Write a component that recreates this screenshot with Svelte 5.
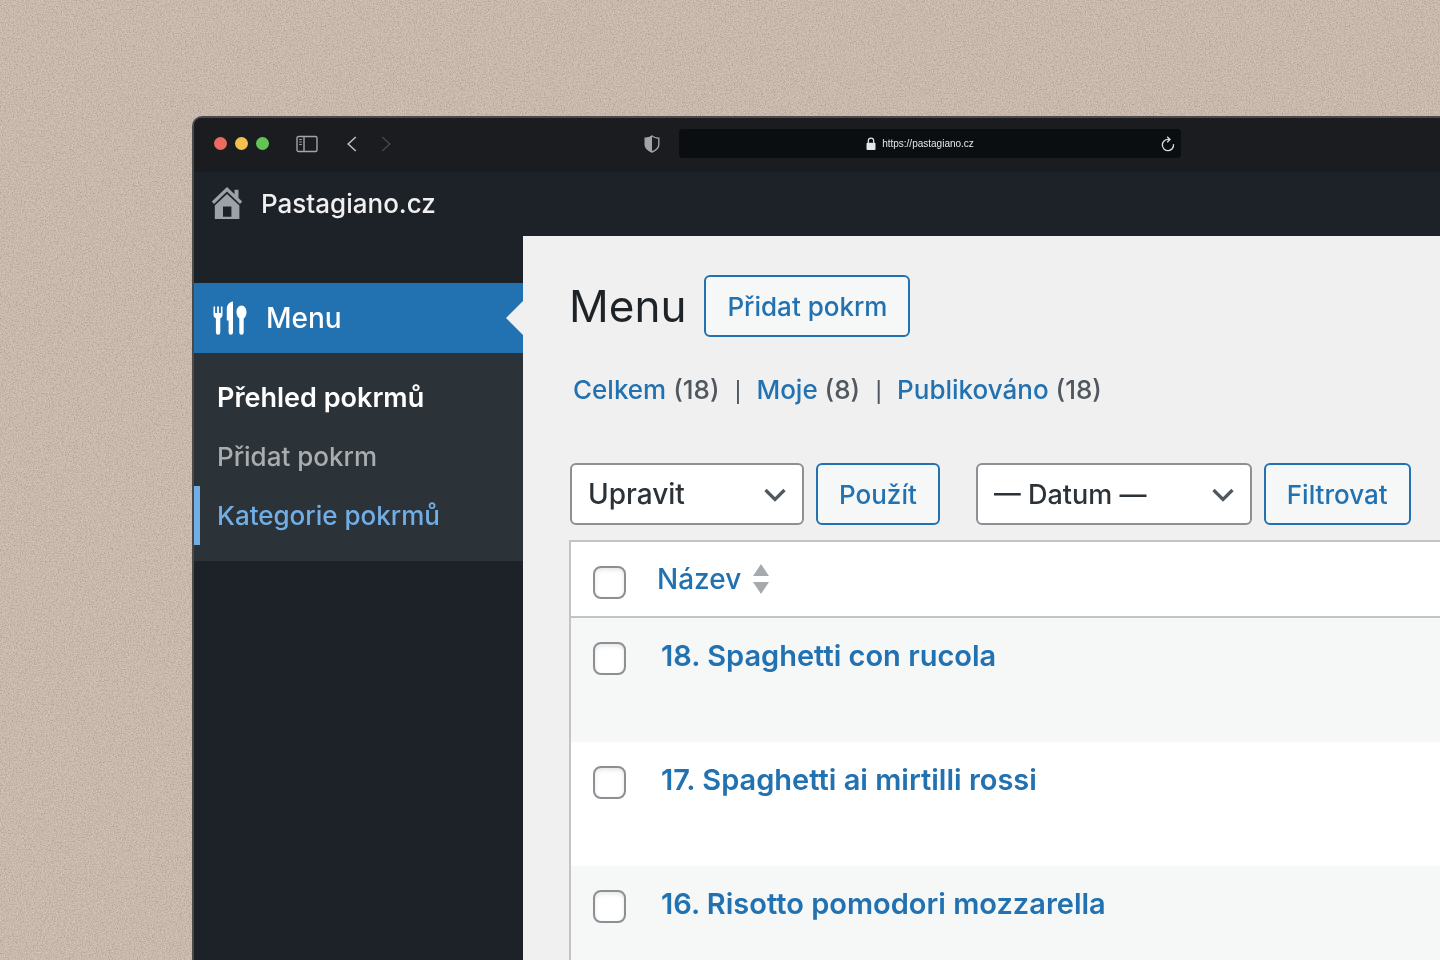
<script lang="ts">
	const submenu = [
		{ label: 'Přehled pokrmů', state: 'current' },
		{ label: 'Přidat pokrm', state: '' },
		{ label: 'Kategorie pokrmů', state: 'hover' }
	];

	const views = [
		{ label: 'Celkem', count: 18 },
		{ label: 'Moje', count: 8 },
		{ label: 'Publikováno', count: 18 }
	];

	const dishes = [
		{ id: 18, name: 'Spaghetti con rucola' },
		{ id: 17, name: 'Spaghetti ai mirtilli rossi' },
		{ id: 16, name: 'Risotto pomodori mozzarella' }
	];
</script>

{#snippet chevron()}
	<svg class="chevron" viewBox="0 0 24 16" aria-hidden="true">
		<path d="M2.5 3 12 12.5 21.5 3" fill="none" stroke="#50575e" stroke-width="3.2" />
	</svg>
{/snippet}

<div class="desktop">
	<svg class="grain" aria-hidden="true">
		<filter id="grain" color-interpolation-filters="sRGB">
			<feTurbulence type="fractalNoise" baseFrequency="0.75" numOctaves="2" seed="4" />
			<feColorMatrix
				values="1.8 0 0 0 -0.4
					1.8 0 0 0 -0.4
					1.8 0 0 0 -0.4
					0 0 0 0 1"
			/>
		</filter>
		<rect width="100%" height="100%" filter="url(#grain)" />
	</svg>

	<div class="window">
		<header class="browser">
			<div class="lights">
				<span class="light red"></span>
				<span class="light yellow"></span>
				<span class="light green"></span>
			</div>
			<button class="icon-btn panel" aria-label="Postranní panel">
				<svg width="22" height="18" viewBox="0 0 22 18" fill="none" stroke="#a3a4a6">
					<rect x="1" y="1.5" width="20" height="15" rx="1.5" stroke-width="1.4" />
					<path d="M8 1.5v15" stroke-width="1.4" />
					<path d="M3.2 4.5h2.6M3.2 7h2.6M3.2 9.5h2.6" stroke-width="1.1" />
				</svg>
			</button>
			<button class="icon-btn back" aria-label="Zpět">
				<svg width="12" height="18" viewBox="0 0 12 18" fill="none" stroke="#b9babc" stroke-width="1.6">
					<path d="M9.8 2 2.2 9l7.6 7" />
				</svg>
			</button>
			<button class="icon-btn forward" aria-label="Vpřed">
				<svg width="12" height="18" viewBox="0 0 12 18" fill="none" stroke="#45474a" stroke-width="1.4">
					<path d="M2.2 2 9.8 9l-7.6 7" />
				</svg>
			</button>
			<button class="icon-btn shield" aria-label="Ochrana soukromí">
				<svg width="16" height="18" viewBox="0 0 16 18">
					<path
						d="M8 1C6.3 2.4 4 3 1.2 3.2v6.3c0 3.3 2.8 5.8 6.8 7.5 4-1.7 6.8-4.2 6.8-7.5V3.2C12 3 9.7 2.4 8 1Z"
						fill="none"
						stroke="#a3a4a6"
						stroke-width="1.4"
					/>
					<path d="M8 1C6.3 2.4 4 3 1.2 3.2v6.3c0 3.3 2.8 5.8 6.8 7.5Z" fill="#a3a4a6" />
				</svg>
			</button>
			<div class="address">
				<span class="url">
					<svg width="10" height="14" viewBox="0 0 10 14">
						<rect x="0.5" y="5.8" width="9" height="7.2" rx="1" fill="#e4e6e8" />
						<path d="M2.3 6V4a2.7 2.8 0 0 1 5.4 0v2" fill="none" stroke="#e4e6e8" stroke-width="1.2" />
					</svg>
					https://pastagiano.cz
				</span>
				<button class="icon-btn" aria-label="Načíst znovu">
					<svg width="14" height="16" viewBox="0 0 14 16" fill="none" stroke="#d8dadc" stroke-width="1.3">
						<path d="M12.5 8.2A5.6 5.6 0 1 1 7.2 3.4h1.6" />
						<path d="M6.2 0.8 9 3.5 6.2 6.2" />
					</svg>
				</button>
			</div>
		</header>

		<div class="adminbar">
			<a href="#web">
				<svg width="32" height="34" viewBox="0 0 32 34" fill="#9ca2a7">
					<path d="M16 1 0.8 15.6l2.2 2.3L16 5.4l13 12.5 2.2-2.3L27.5 12V3.8h-4v4.4Z" />
					<path d="M16 8 3.8 19.6V33h24.6V19.6ZM12 20.5h8.4v10.3H12Z" fill-rule="evenodd" />
				</svg>
				Pastagiano.cz
			</a>
		</div>

		<div class="body">
			<nav class="sidebar">
				<a class="top" href="#menu">
					<svg width="34" height="34" viewBox="0 0 34 34" fill="#fff">
						<path
							d="M0.5 5.5h1.6v6.5h2V5.5h1.8v6.500h2V5.500h1.600v8.200c0 1.800-.8 3-2.200 3.500V31.500a2.200 2.200 0 0 1-4.400 0V17.200C1.300 16.700.5 15.500.5 13.700Z"
						/>
						<path d="M20 .6v31a2.2 2.2 0 0 1-4.4 0V19.500h-1.800V8C13.800 4 16.500 1 20 .6Z" />
						<path
							d="M28.500 4.500c3 0 5 3 5 6.700 0 3-1.200 5.200-2.800 6.200v14.100a2.200 2.200 0 0 1-4.400 0V17.400c-1.600-1-2.800-3.200-2.800-6.200 0-3.700 2-6.700 5-6.700Z"
						/>
					</svg>
					Menu
				</a>
				<ul>
					{#each submenu as item}
						<li><a class={item.state} href="#menu">{item.label}</a></li>
					{/each}
				</ul>
			</nav>

			<main>
				<div class="heading">
					<h1>Menu</h1>
					<button class="btn">Přidat pokrm</button>
				</div>

				<ul class="views">
					{#each views as view}
						<li><a href="#menu">{view.label}</a> <span>({view.count})</span></li>
					{/each}
				</ul>

				<div class="filters">
					<div class="select action">
						<select aria-label="Hromadné úpravy">
							<option>Upravit</option>
						</select>
						{@render chevron()}
					</div>
					<button class="btn">Použít</button>
					<div class="select date">
						<select aria-label="Filtrovat podle data">
							<option>— Datum —</option>
						</select>
						{@render chevron()}
					</div>
					<button class="btn">Filtrovat</button>
				</div>

				<table>
					<thead>
						<tr>
							<td class="check"><input type="checkbox" aria-label="Vybrat vše" /></td>
							<th scope="col">
								<a href="#nazev">
									Název
									<svg width="16" height="32" viewBox="0 0 16 32" fill="#a7aaad">
										<path d="M8 1 16 13H0ZM8 31 0 19h16Z" />
									</svg>
								</a>
							</th>
						</tr>
					</thead>
					<tbody>
						{#each dishes as dish}
							<tr>
								<td class="check"><input type="checkbox" aria-label={dish.name} /></td>
								<td class="name"><a href="#{dish.id}">{dish.id}. {dish.name}</a></td>
							</tr>
						{/each}
					</tbody>
				</table>
			</main>
		</div>
	</div>
</div>

<style>
	:global(body) {
		background: #c9b9ad;
	}
	.desktop {
		position: relative;
		box-sizing: border-box;
		height: 100vh;
		padding: 116px 0 0 192px;
		overflow: hidden;
		display: flex;
		font-family: Inter, 'Liberation Sans', sans-serif;
		font-size: 26px;
		font-weight: 450;
	}
	.grain {
		position: absolute;
		inset: 0;
		width: 100%;
		height: 100%;
		opacity: 0.45;
		mix-blend-mode: soft-light;
	}
	a {
		color: #2271b1;
		text-decoration: none;
	}
	ul {
		list-style: none;
		margin: 0;
		padding: 0;
	}
	svg {
		flex: none;
		display: block;
	}
	.window {
		position: relative;
		flex: 1;
		min-width: 0;
		display: flex;
		flex-direction: column;
		border: solid #4b4a49;
		border-width: 2px 0 0 2px;
		border-radius: 10px 0 0 0;
		overflow: hidden;
		background: #1d2228;
	}

	.browser {
		flex: none;
		display: flex;
		align-items: center;
		box-sizing: border-box;
		height: 54px;
		padding: 0 0 3px 20px;
		background: #1b1c1f;
	}
	.lights {
		display: flex;
		gap: 8px;
	}
	.light {
		width: 13px;
		height: 13px;
		border-radius: 50%;
	}
	.red {
		background: #ed6a5e;
	}
	.yellow {
		background: #f5bf4f;
	}
	.green {
		background: #61c554;
	}
	.icon-btn {
		padding: 0;
		border: 0;
		background: none;
	}
	.panel {
		margin-left: 27px;
	}
	.back {
		margin-left: 28px;
	}
	.forward {
		margin-left: 22px;
	}
	.shield {
		margin-left: 252px;
	}
	.address {
		display: flex;
		align-items: center;
		box-sizing: border-box;
		width: 502px;
		height: 29px;
		margin-left: 19px;
		padding-right: 6px;
		border-radius: 4px;
		background: #0b0e11;
	}
	.url {
		flex: 1;
		display: flex;
		justify-content: center;
		align-items: center;
		gap: 6px;
		color: #e4e6e8;
		font: 10px 'Liberation Sans', Arial, sans-serif;
	}

	.adminbar {
		flex: none;
		box-sizing: border-box;
		height: 64px;
		display: flex;
		align-items: center;
		padding: 0 0 2px 17px;
	}
	.adminbar a {
		display: flex;
		align-items: center;
		gap: 18px;
		color: #f0f0f1;
	}

	.body {
		flex: 1;
		min-height: 0;
		display: flex;
	}
	.sidebar {
		flex: none;
		width: 329px;
		padding-top: 47px;
	}
	.top {
		position: relative;
		display: flex;
		align-items: center;
		gap: 19px;
		height: 70px;
		padding-left: 19px;
		background: #2271b1;
		color: #fff;
		font-size: 28px;
	}
	.top::after {
		content: '';
		position: absolute;
		right: 0;
		border: 17px solid transparent;
		border-left: 0;
		border-right-color: #f0f0f1;
	}
	.sidebar ul {
		padding: 15px 0 16px;
		background: #2c3338;
	}
	.sidebar li a {
		display: block;
		padding-left: 23px;
		line-height: 59px;
		color: #a9adb0;
	}
	.sidebar li .current {
		color: #fff;
		font-size: 27px;
		font-weight: 600;
	}
	.sidebar li .hover {
		color: #72aee6;
		box-shadow: inset 6px 0 #72aee6;
	}

	main {
		flex: 1;
		min-width: 0;
		padding: 39px 0 0 46px;
		background: #f0f0f1;
	}
	.heading {
		display: flex;
		align-items: center;
		gap: 18px;
	}
	h1 {
		margin: 0;
		color: #1d2327;
		font-size: 44px;
		font-weight: 400;
		line-height: 62px;
	}
	.btn {
		height: 62px;
		padding: 0 21px;
		border: 2px solid #2271b1;
		border-radius: 6px;
		background: #f6f7f7;
		color: #2271b1;
		font: inherit;
	}
	.views {
		display: flex;
		margin: 33px 0 51px 4px;
		line-height: 40px;
		color: #50575e;
	}
	.views li + li::before {
		content: '|';
		margin: 0 15px;
		font-size: 20px;
	}
	.filters {
		display: flex;
		gap: 12px;
		padding-left: 1px;
	}
	.select {
		position: relative;
	}
	.action {
		width: 234px;
	}
	.date {
		width: 276px;
		margin-left: 24px;
	}
	select {
		appearance: none;
		width: 100%;
		height: 62px;
		padding: 0 48px 0 16px;
		border: 2px solid #8c8f94;
		border-radius: 6px;
		background: #fff;
		color: #2c3338;
		font: inherit;
		font-size: 28px;
	}
	.date select {
		font-size: 27px;
	}
	.chevron {
		position: absolute;
		top: 24px;
		right: 17px;
		width: 24px;
		height: 16px;
		pointer-events: none;
	}

	table {
		width: 100%;
		margin-top: 15px;
		border: solid #c3c4c7;
		border-width: 2px 0 0 2px;
		border-spacing: 0;
		background: #fff;
	}
	td,
	th {
		padding: 0;
		vertical-align: top;
		text-align: left;
		font-weight: 450;
	}
	thead td,
	thead th {
		height: 73px;
		border-bottom: 2px solid #c3c4c7;
	}
	tbody td {
		height: 124px;
	}
	tbody tr:nth-child(odd) {
		background: #f6f7f7;
	}
	.check {
		width: 86px;
	}
	input {
		appearance: none;
		display: block;
		box-sizing: border-box;
		width: 33px;
		height: 33px;
		margin: 24px 0 0 22px;
		border: 2px solid #8c8f94;
		border-radius: 8px;
		background: #fff;
		box-shadow: inset 0 2px 4px rgba(0, 0, 0, 0.1);
	}
	th a {
		display: flex;
		align-items: center;
		gap: 12px;
		font-size: 28px;
		line-height: 74px;
	}
	.name a {
		display: block;
		padding-left: 4px;
		font-size: 29px;
		font-weight: 600;
		line-height: 76px;
	}
</style>
